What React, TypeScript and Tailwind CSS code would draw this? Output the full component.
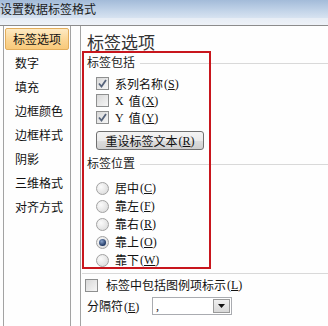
import React from "react";

const FONT = { fontFamily: '"Noto Sans CJK SC", "Liberation Sans", sans-serif' };

function Mn({ k }: { k: string }) {
  return (
    <span className="ml-[1px] text-[12px]" style={{ fontFamily: '"Liberation Serif", serif' }}>
      (<span className="underline underline-offset-[1px]">{k}</span>)
    </span>
  );
}

function Check({ checked }: { checked?: boolean }) {
  return (
    <span className="relative inline-flex h-[13px] w-[13px] shrink-0 items-center justify-center border border-[#8e8f8f] bg-[linear-gradient(135deg,#d8d8d8,#f6f6f6)]">
      {checked && (
        <svg width="11" height="11" viewBox="0 0 11 11">
          <path d="M2 5.5 L4.5 8.5 L9 2" fill="none" stroke="#56637a" strokeWidth="1.8" />
        </svg>
      )}
    </span>
  );
}

function Radio({ checked }: { checked?: boolean }) {
  return (
    <span className="relative inline-flex h-[13px] w-[13px] shrink-0 items-center justify-center rounded-full border border-[#a2a2a2] bg-[radial-gradient(circle_at_35%_35%,#fbfbfb,#d6d6d6)]">
      {checked && (
        <span className="h-[7px] w-[7px] rounded-full bg-[radial-gradient(circle_at_40%_35%,#8aa4cc,#1d3561_70%)]" />
      )}
    </span>
  );
}

function GroupHead({ text }: { text: string }) {
  return (
    <div className="flex h-[16px] items-center">
      <span className="text-[12px] leading-[16px] text-[#222]">{text}</span>
      <div className="ml-[5px] mt-[2px] h-px flex-1 bg-[#d9d9d9]" />
    </div>
  );
}

export default function App() {
  const side = ["数字", "填充", "边框颜色", "边框样式", "阴影", "三维格式", "对齐方式"];
  return (
    <div className="relative h-[326px] w-[328px] overflow-hidden bg-[#fefefe] text-[#111]" style={FONT}>
      <div className="h-[26px] border-b border-[#8c8c8c] bg-[linear-gradient(to_bottom,#a3bbd9_0%,#c4d5e9_45%,#d6e2f0_70%,#e7edf5_74%,#eef2f8_100%)] pt-[1px] text-[12px] leading-[16px] text-[#1a1a1a]">
        设置数据标签格式
      </div>
      <div className="flex h-[300px]">
        <div className="ml-[3px] w-[68px] border-x border-[#a3a3a3] px-[1px] pt-[2px]">
          <div className="mb-[2px] flex h-[22px] items-center justify-center rounded-[2px] border border-[#e2ad5c] bg-[linear-gradient(to_bottom,#fdeac4,#fbd798_50%,#f8c97a)] text-[12px]">
            标签选项
          </div>
          {side.map((s) => (
            <div key={s} className="mb-[2px] flex h-[22px] items-center pl-[10px] text-[12px]">
              {s}
            </div>
          ))}
        </div>
        <div className="ml-[9px] flex-1 border-l border-[#a3a3a3] pl-[6px]">
          <div className="mt-[6px] h-[20px] text-[17px] leading-[20px] text-[#333]">标签选项</div>
          <div className="mt-[2px]">
            <GroupHead text="标签包括" />
          </div>
          <div className="mt-[5px] pl-[9px] text-[12px]">
            <div className="flex h-[17px] items-center">
              <Check checked />
              <span className="ml-[6px]">系列名称</span>
              <Mn k="S" />
            </div>
            <div className="flex h-[17px] items-center">
              <Check />
              <span className="ml-[6px]" style={{ fontFamily: '"Liberation Serif", serif' }}>X</span>
              <span className="ml-[5px]">值</span>
              <Mn k="X" />
            </div>
            <div className="flex h-[17px] items-center">
              <Check checked />
              <span className="ml-[6px]" style={{ fontFamily: '"Liberation Serif", serif' }}>Y</span>
              <span className="ml-[5px]">值</span>
              <Mn k="Y" />
            </div>
            <div className="mt-[5px] flex h-[19px] w-[108px] items-center justify-center rounded-[3px] border border-[#707070] bg-[linear-gradient(to_bottom,#f4f4f4,#ebebeb_50%,#dddddd_51%,#cfcfcf)] text-[12px]">
              重设标签文本
              <Mn k="R" />
            </div>
          </div>
          <div className="mt-[5px]">
            <GroupHead text="标签位置" />
          </div>
          <div className="mt-[8px] pl-[9px] text-[12px]">
            {[
              ["居中", "C", false],
              ["靠左", "F", false],
              ["靠右", "R", false],
              ["靠上", "O", true],
              ["靠下", "W", false],
            ].map(([t, k, c]) => (
              <div key={t as string} className="flex h-[18px] items-center">
                <Radio checked={c as boolean} />
                <span className="ml-[6px]">{t as string}</span>
                <Mn k={k as string} />
              </div>
            ))}
          </div>
          <div className="-ml-[5px] mt-[4px] h-px bg-[#d9d9d9]" />
          <div className="-ml-[2px] mt-[2px] flex h-[18px] items-center text-[12px]">
            <Check />
            <span className="ml-[8px]">标签中包括图例项标示</span>
            <Mn k="L" />
          </div>
          <div className="mt-[2px] flex h-[20px] items-center text-[12px]">
            <div className="w-[65px]">
              分隔符
              <Mn k="E" />
            </div>
            <div className="flex h-[18px] w-[80px] items-stretch border border-[#a9abb0] bg-white">
              <div className="flex-1 pl-[3px] text-[12px] leading-[16px]" style={{ fontFamily: '"Liberation Serif", serif' }}>
                ,
              </div>
              <div className="m-[1px] flex w-[17px] items-center justify-center border border-[#9a9a9a] bg-[linear-gradient(to_bottom,#f0f0f0,#d8d8d8)]">
                <svg width="7" height="4" viewBox="0 0 7 4">
                  <path d="M0 0 H7 L3.5 4 Z" fill="#111" />
                </svg>
              </div>
            </div>
          </div>
        </div>
      </div>
      <div className="pointer-events-none absolute left-[82px] top-[51px] h-[218px] w-[129px] border-2 border-[#c8161d]" />
    </div>
  );
}
